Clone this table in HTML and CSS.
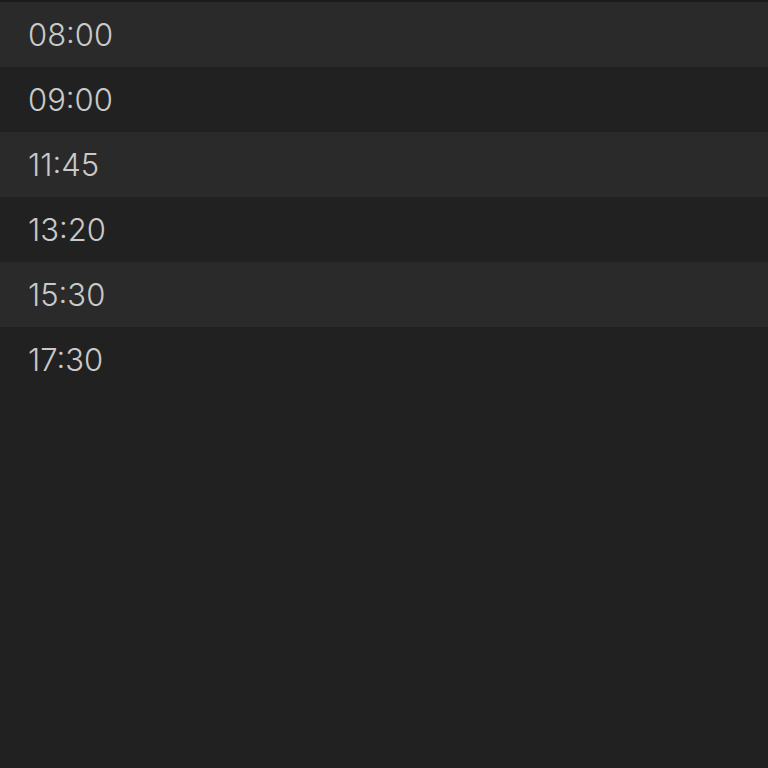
FILE: index.html
```html
<!DOCTYPE html>
<html lang="en">
<head>
    <meta charset="UTF-8">
    <meta name="viewport" content="width=device-width, initial-scale=1.0">
    <title>Horaires</title>
    <link rel="stylesheet" href="styles.css">
</head>
<body>
    <!-- Liste des horaires -->
    <div class="list">
        <div class="row">08:00</div>
        <div class="row">09:00</div>
        <div class="row">11:45</div>
        <div class="row">13:20</div>
        <div class="row">15:30</div>
        <div class="row">17:30</div>
    </div>
</body>
</html>
```
FILE: styles.css
```css
body {
    font-family: Inter, Roboto, sans-serif;
    margin: 0;
    padding: 0;
    background: #212121;
    height: 768px;
    overflow: hidden;
}
.list {
    border-top: 2px solid #1c1c1c;
    display: flex;
    flex-direction: column;
}
.row {
    height: 65px;
    display: flex;
    align-items: center;
    padding-left: 28px;
    font-size: 31px;
    font-weight: 350;
    color: #c9c9c9;
}
.row:nth-child(odd) {
    background: #2a2a2a;
}
```
